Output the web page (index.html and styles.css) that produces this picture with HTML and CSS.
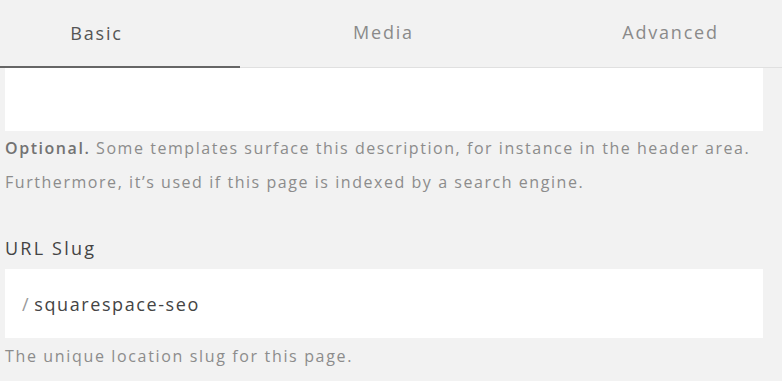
FILE: index.html
```html
<!DOCTYPE html>
<html>
<head>
<meta charset="utf-8">
<link rel="stylesheet" href="styles.css">
</head>
<body>
<nav class="tabs">
  <div class="tab active">Basic</div>
  <div class="tab">Media</div>
  <div class="tab">Advanced</div>
</nav>
<main class="panel">
  <div class="textarea"></div>
  <p class="help"><span class="strong">Optional.</span> Some templates surface this description, for instance in the header area.<br>Furthermore, it’s used if this page is indexed by a search engine.</p>
  <label class="label">URL Slug</label>
  <div class="input"><span class="slash">/</span>squarespace-seo</div>
  <p class="help small">The unique location slug for this page.</p>
</main>
</body>
</html>
```
FILE: styles.css
```css
html, body {
  margin: 0;
  padding: 0;
  background: #f2f2f2;
  font-family: "Open Sans", sans-serif;
  overflow: hidden;
}
.tabs {
  display: grid;
  grid-template-columns: 287px 287px 287px;
  margin-left: -47px;
  height: 67px;
  border-bottom: 1px solid #e0e0e0;
}
.tab {
  display: flex;
  align-items: center;
  justify-content: center;
  font-size: 18px;
  letter-spacing: 1.8px;
  color: #8a8a8a;
  padding-bottom: 3px;
}
.tab.active {
  color: #555;
  border-bottom: 2px solid #666;
  margin-bottom: -1px;
  padding-bottom: 1px;
}
.panel {
  padding: 0 19px 0 5px;
}
.textarea {
  height: 63px;
  background: #fff;
}
.help {
  margin: 0;
  font-size: 16px;
  line-height: 34px;
  color: #8c8c8c;
  letter-spacing: 1.55px;
  white-space: nowrap;
}
.strong {
  color: #737373;
  font-weight: 600;
}
.label {
  display: block;
  margin-top: 37px;
  font-size: 18px;
  line-height: 24px;
  color: #444;
  letter-spacing: 2.2px;
}
.input {
  margin-top: 9px;
  height: 69px;
  background: #fff;
  display: flex;
  align-items: center;
  padding-left: 17px;
  font-size: 18px;
  color: #444;
  letter-spacing: 1.6px;
}
.slash {
  color: #999;
  margin-right: 4px;
}
.help.small {
  line-height: 36px;
  letter-spacing: 1.65px;
}
```
